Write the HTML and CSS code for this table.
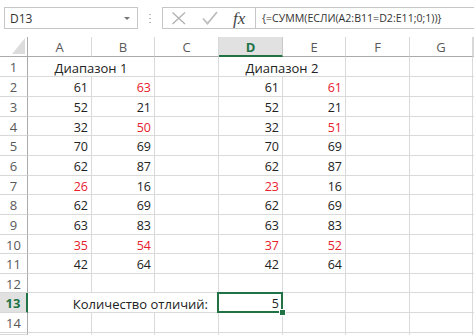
FILE: index.html
```html
<!DOCTYPE html>
<html lang="ru">
<head>
<meta charset="utf-8">
<title>Excel</title>
<link rel="stylesheet" href="styles.css">
</head>
<body>
<div class="app">
  <div class="toolbar">
    <div class="namebox">
      <span class="name">D13</span>
      <span class="arrow"></span>
    </div>
    <div class="sep"><span class="dots"></span></div>
    <div class="fbar">
      <div class="fbtns">
        <svg class="ico" width="16" height="14" viewBox="0 0 16 14"><path d="M1.5 1.5 L14 13 M14 1.5 L1.5 13" stroke="#b3b3b3" stroke-width="1.4" fill="none"/></svg>
        <svg class="ico chk" width="16" height="14" viewBox="0 0 16 14"><path d="M1 7.5 L5.5 12.5 L15 1" stroke="#bdbdbd" stroke-width="1.8" fill="none"/></svg>
        <span class="fx">fx</span>
      </div>
      <div class="formula">{=СУММ(ЕСЛИ(A2:B11=D2:E11;0;1))}</div>
    </div>
  </div>
  <div class="sheet">
    <div class="corner"><svg width="27" height="19" viewBox="0 0 27 19"><polygon points="25,1 25,17 12,17" fill="#dcdcdc"/></svg></div>
    <div class="ch">A</div><div class="ch">B</div><div class="ch">C</div><div class="ch sel">D</div><div class="ch">E</div><div class="ch">F</div><div class="ch">G</div><div class="ch"></div>

    <div class="rh">1</div><div class="c span2 ctr t">Диапазон 1</div><div class="c"></div><div class="c span2 ctr t">Диапазон 2</div><div class="c"></div><div class="c"></div><div class="c"></div>

    <div class="rh">2</div><div class="c n">61</div><div class="c n r">63</div><div class="c"></div><div class="c n">61</div><div class="c n r">61</div><div class="c"></div><div class="c"></div><div class="c"></div>
    <div class="rh">3</div><div class="c n">52</div><div class="c n">21</div><div class="c"></div><div class="c n">52</div><div class="c n">21</div><div class="c"></div><div class="c"></div><div class="c"></div>
    <div class="rh">4</div><div class="c n">32</div><div class="c n r">50</div><div class="c"></div><div class="c n">32</div><div class="c n r">51</div><div class="c"></div><div class="c"></div><div class="c"></div>
    <div class="rh">5</div><div class="c n">70</div><div class="c n">69</div><div class="c"></div><div class="c n">70</div><div class="c n">69</div><div class="c"></div><div class="c"></div><div class="c"></div>
    <div class="rh">6</div><div class="c n">62</div><div class="c n">87</div><div class="c"></div><div class="c n">62</div><div class="c n">87</div><div class="c"></div><div class="c"></div><div class="c"></div>
    <div class="rh">7</div><div class="c n r">26</div><div class="c n">16</div><div class="c"></div><div class="c n r">23</div><div class="c n">16</div><div class="c"></div><div class="c"></div><div class="c"></div>
    <div class="rh">8</div><div class="c n">62</div><div class="c n">69</div><div class="c"></div><div class="c n">62</div><div class="c n">69</div><div class="c"></div><div class="c"></div><div class="c"></div>
    <div class="rh">9</div><div class="c n">63</div><div class="c n">83</div><div class="c"></div><div class="c n">63</div><div class="c n">83</div><div class="c"></div><div class="c"></div><div class="c"></div>
    <div class="rh">10</div><div class="c n r">35</div><div class="c n r">54</div><div class="c"></div><div class="c n r">37</div><div class="c n r">52</div><div class="c"></div><div class="c"></div><div class="c"></div>
    <div class="rh">11</div><div class="c n">42</div><div class="c n">64</div><div class="c"></div><div class="c n">42</div><div class="c n">64</div><div class="c"></div><div class="c"></div><div class="c"></div>
    <div class="rh">12</div><div class="c"></div><div class="c"></div><div class="c"></div><div class="c"></div><div class="c"></div><div class="c"></div><div class="c"></div><div class="c"></div>
    <div class="rh sel">13</div><div class="c span3 label t">Количество отличий:</div><div class="c n active">5</div><div class="c"></div><div class="c"></div><div class="c"></div><div class="c"></div>
    <div class="rh">14</div><div class="c"></div><div class="c"></div><div class="c"></div><div class="c"></div><div class="c"></div><div class="c"></div><div class="c"></div><div class="c"></div>
    <div class="rh"></div><div class="c"></div><div class="c"></div><div class="c"></div><div class="c"></div><div class="c"></div><div class="c"></div><div class="c"></div><div class="c"></div>
  </div>
</div>
</body>
</html>
```
FILE: styles.css
```css
* { box-sizing: border-box; }
html, body { margin: 0; padding: 0; background: #fff; }
body { width: 474px; height: 335px; overflow: hidden; font-family: "Open Sans", "Noto Sans", sans-serif; color: #222; }

.app { display: flex; flex-direction: column; width: 474px; height: 335px; overflow: hidden; }

.toolbar { display: flex; height: 37px; padding: 7px 0 0 4px; align-items: flex-start; }
.namebox { width: 134px; height: 22px; border: 1px solid #c6c6c6; display: flex; align-items: center; justify-content: space-between; padding: 0 7px 0 5px; }
.name { font-size: 12px; color: #333; }
.arrow { width: 0; height: 0; border-left: 3px solid transparent; border-right: 3px solid transparent; border-top: 3px solid #777; }
.sep { width: 24px; height: 22px; display: flex; justify-content: center; align-items: center; }
.dots { width: 2px; height: 9px; background: repeating-linear-gradient(#bbb 0 1px, transparent 1px 4px); }
.fbar { flex: 1; min-width: 0; height: 22px; border: 1px solid #c6c6c6; border-right: none; display: flex; }
.fbtns { flex: none; width: 93px; border-right: 1px solid #c6c6c6; display: flex; align-items: center; padding-left: 8px; gap: 14px; }
.fbtns .chk { margin-left: 1px; }
.fx { font-family: "Liberation Serif", serif; font-style: italic; font-size: 17px; color: #444; line-height: 1; margin-left: 1px; }
.formula { padding-left: 6px; font-size: 10.6px; display: flex; align-items: center; color: #333; white-space: nowrap; overflow: hidden; }

.sheet { display: grid; grid-template-columns: 28px 64px 63px 64px 64px 63px 64px 63px minmax(0, 1fr);
  grid-template-rows: 20px 20px 20px 20px 19px 20px 20px 19px 20px 20px 19px 20px 19px 20px 20px 2px;
  font-size: 12.5px; overflow: hidden; }

.corner { border-right: 1px solid #ababab; border-bottom: 1px solid #ababab; }
.corner svg { display: block; }
.ch { border-right: 1px solid #d8d8d8; border-bottom: 1px solid #ababab; display: flex; align-items: center; justify-content: center; color: #595959; font-size: 13px; padding-top: 1px; }
.ch.sel { background: #e1e1e1; color: #217346; font-weight: 700; border-bottom: 2px solid #217346; border-right-color: #c8c8c8; }
.rh { border-right: 1px solid #ababab; border-bottom: 1px solid #d8d8d8; display: flex; align-items: center; justify-content: center; color: #595959; font-size: 13px; padding-top: 1px; }
.rh.sel { background: #e1e1e1; color: #217346; font-weight: 700; border-right: 2px solid #217346; }

.c { border-right: 1px solid #dadada; border-bottom: 1px solid #dadada; display: flex; align-items: center; padding: 2px 3px 0 3px; white-space: nowrap; overflow: visible; }
.n { justify-content: flex-end; }
.t { font-size: 13px; }
.r { color: #e8202e; }
.span2 { grid-column: span 2; }
.span3 { grid-column: span 3; }
.ctr { justify-content: center; }
.label { justify-content: flex-end; padding-right: 10px; }
.active { position: relative; }
.active::after { content: ""; position: absolute; left: -2px; top: -1px; right: -1px; bottom: -1px; border: 2px solid #217346; }
.active::before { content: ""; position: absolute; right: -4px; bottom: -4px; width: 5px; height: 5px; background: #217346; border: 1px solid #fff; z-index: 1; }
```
